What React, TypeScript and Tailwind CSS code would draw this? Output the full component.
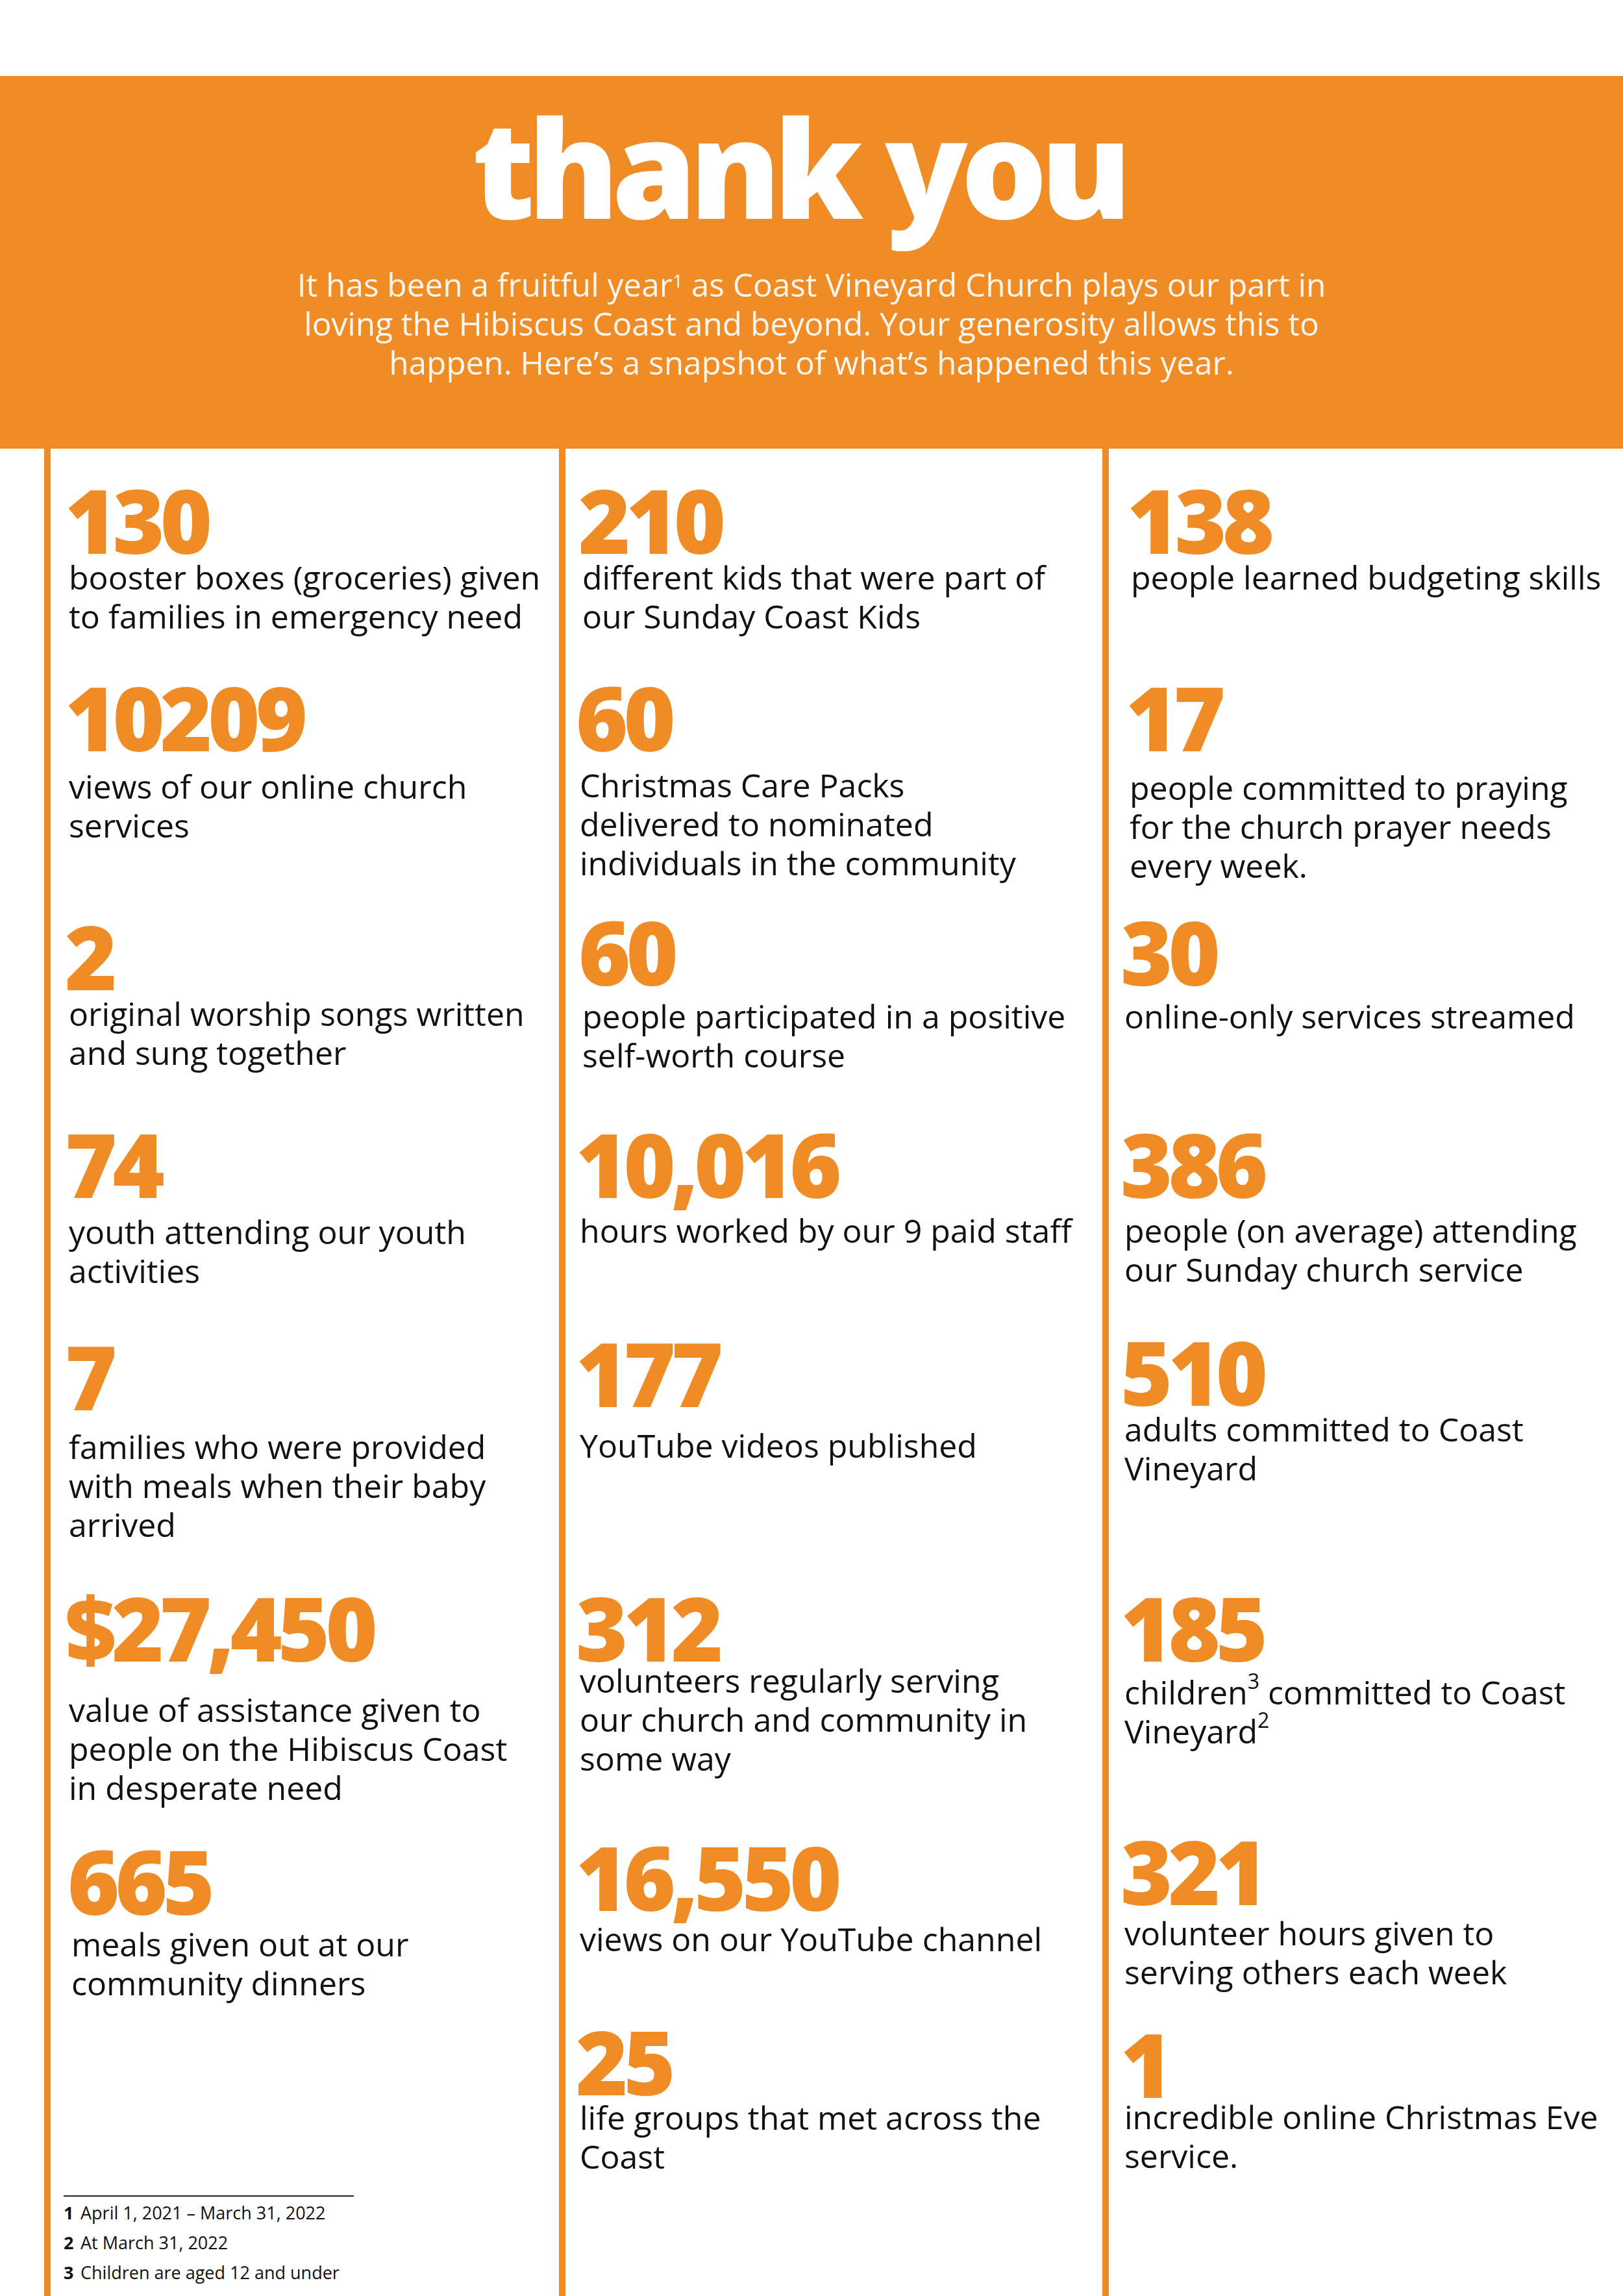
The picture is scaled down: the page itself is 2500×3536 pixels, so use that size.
import { Fragment } from "react";
import type { ReactNode } from "react";

interface Stat {
  value: string;
  lines: ReactNode[];
  top: string; // space above the number
  gap: string; // space between number and description
  shift?: string;
}

const left: Stat[] = [
  { value: "130", top: "mt-[57px]", gap: "mt-[7px]", lines: ["booster boxes (groceries) given", "to families in emergency need"] },
  { value: "10209", top: "mt-[73px]", gap: "mt-[25px]", lines: ["views of our online church", "services"] },
  { value: "2", top: "mt-[119px]", gap: "mt-[7px]", lines: ["original worship songs written", "and sung together"] },
  { value: "74", top: "mt-[89px]", gap: "mt-[23px]", lines: ["youth attending our youth", "activities"] },
  { value: "7", top: "mt-[80px]", gap: "mt-[27px]", lines: ["families who were provided", "with meals when their baby", "arrived"] },
  { value: "$27,450", top: "mt-[76px]", gap: "mt-[45px]", lines: ["value of assistance given to", "people on the Hibiscus Coast", "in desperate need"] },
  { value: "665", top: "mt-[61px]", gap: "mt-[16px]", shift: "ml-[4px]", lines: ["meals given out at our", "community dinners"] },
];

const middle: Stat[] = [
  { value: "210", top: "mt-[57px]", gap: "mt-[7px]", shift: "ml-[4px]", lines: ["different kids that were part of", "our Sunday Coast Kids"] },
  { value: "60", top: "mt-[73px]", gap: "mt-[23px]", lines: ["Christmas Care Packs", "delivered to nominated", "individuals in the community"] },
  { value: "60", top: "mt-[54px]", gap: "mt-[18px]", shift: "ml-[4px]", lines: ["people participated in a positive", "self-worth course"] },
  { value: "10,016", top: "mt-[85px]", gap: "mt-[21px]", lines: ["hours worked by our 9 paid staff"] },
  { value: "177", top: "mt-[137px]", gap: "mt-[30px]", lines: ["YouTube videos published"] },
  { value: "312", top: "mt-[198px]", gap: "mt-[0px]", lines: ["volunteers regularly serving", "our church and community in", "some way"] },
  { value: "16,550", top: "mt-[100px]", gap: "mt-[14px]", lines: ["views on our YouTube channel"] },
  { value: "25", top: "mt-[106px]", gap: "mt-[5px]", lines: ["life groups that met across the", "Coast"] },
];

const right: Stat[] = [
  { value: "138", top: "mt-[57px]", gap: "mt-[7px]", shift: "ml-[10px]", lines: ["people learned budgeting skills"] },
  { value: "17", top: "mt-[133px]", gap: "mt-[27px]", shift: "ml-[8px]", lines: ["people committed to praying", "for the church prayer needs", "every week."] },
  { value: "30", top: "mt-[50px]", gap: "mt-[18px]", lines: ["online-only services streamed"] },
  { value: "386", top: "mt-[145px]", gap: "mt-[21px]", lines: ["people (on average) attending", "our Sunday church service"] },
  { value: "510", top: "mt-[75px]", gap: "mt-[7px]", lines: ["adults committed to Coast", "Vineyard"] },
  {
    value: "185",
    top: "mt-[163px]",
    gap: "mt-[18px]",
    lines: [
      <>children<sup className="text-[32px] top-[-0.75em]">3</sup> committed to Coast</>,
      <>Vineyard<sup className="text-[32px] top-[-0.75em]">2</sup></>,
    ],
  },
  { value: "321", top: "mt-[133px]", gap: "mt-[14px]", lines: ["volunteer hours given to", "serving others each week"] },
  { value: "1", top: "mt-[59px]", gap: "mt-[0px]", lines: ["incredible online Christmas Eve", "service."] },
];

function StatBlock({ stat }: { stat: Stat }) {
  return (
    <div className={`${stat.top} ${stat.shift ?? ""}`}>
      <div className="-ml-[6px] text-[137px] leading-[104px] font-extrabold tracking-[-0.05em] text-[#ef8c26]">
        {stat.value}
      </div>
      <p className={`${stat.gap} whitespace-nowrap text-[50px] leading-[60px] text-[#111111]`}>
        {stat.lines.map((line, i) => (
          <Fragment key={i}>
            {i > 0 && <br />}
            {line}
          </Fragment>
        ))}
      </p>
    </div>
  );
}

const notes = [
  ["1", "April 1, 2021 – March 31, 2022"],
  ["2", "At March 31, 2022"],
  ["3", "Children are aged 12 and under"],
];

export default function App() {
  return (
    <div className="w-[2500px] h-[3536px] bg-white flex flex-col font-['Open_Sans','Noto_Sans',sans-serif] overflow-hidden">
      <div className="h-[117px] shrink-0" />

      <header className="h-[574px] shrink-0 bg-[#ef8c26] flex flex-col items-center pt-[35px]">
        <h1 className="text-[209px] leading-none font-extrabold tracking-[-0.05em] text-white mr-[40px]">
          thank you
        </h1>
        <p className="mt-[47px] text-center text-[49.5px] leading-[60px] text-[#fdf6ee]">
          It has been a fruitful year<sup className="text-[28px]">1</sup> as Coast Vineyard Church plays our part in
          <br />
          loving the Hibiscus Coast and beyond. Your generosity allows this to
          <br />
          happen. Here’s a snapshot of what’s happened this year.
        </p>
      </header>

      <main className="flex-1 flex pl-[68px]">
        <section className="w-[793px] shrink-0 flex flex-col border-l-[10px] border-[#ef8c26] pl-[28px]">
          {left.map((s, i) => (
            <StatBlock key={i} stat={s} />
          ))}
          <div className="mt-auto ml-[-8px] pb-[13px]">
            <div className="w-[447px] h-[2px] bg-[#222222]" />
            <div className="mt-[2px] text-[27px] leading-[46px] text-[#111111]">
              {notes.map(([n, text]) => (
                <div key={n} className="flex whitespace-nowrap">
                  <span className="w-[26px] font-bold">{n}</span>
                  <span>{text}</span>
                </div>
              ))}
            </div>
          </div>
        </section>

        <section className="w-[837px] shrink-0 flex flex-col border-l-[10px] border-[#ef8c26] pl-[22px]">
          {middle.map((s, i) => (
            <StatBlock key={i} stat={s} />
          ))}
        </section>

        <section className="flex-1 flex flex-col border-l-[10px] border-[#ef8c26] pl-[24px]">
          {right.map((s, i) => (
            <StatBlock key={i} stat={s} />
          ))}
        </section>
      </main>
    </div>
  );
}
